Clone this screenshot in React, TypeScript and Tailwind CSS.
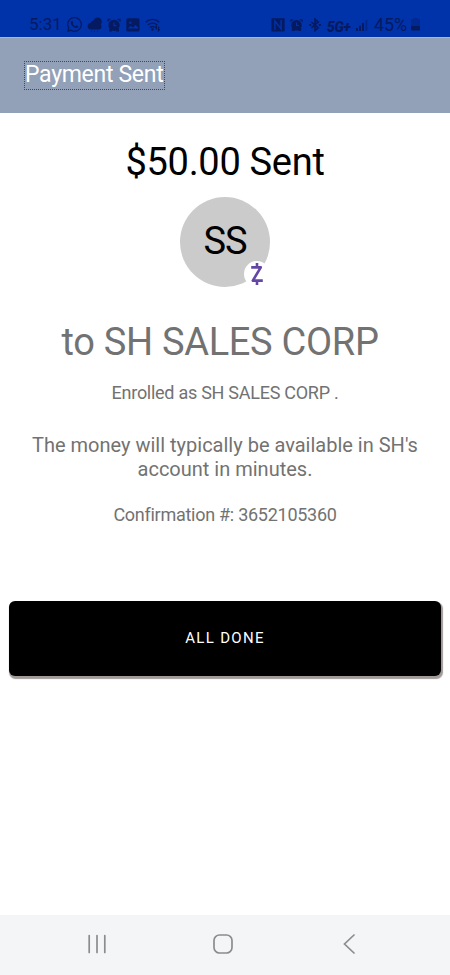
import type { ReactNode } from "react";
import { FaWhatsapp } from "react-icons/fa";

const AlarmIcon = ({ className }: { className?: string }) => (
  <svg viewBox="0 0 14 14" className={className} fill="currentColor">
    <circle cx="7" cy="7.3" r="5.6" />
    <path d="M.4 4V.8h3.8zM13.6 4V.8H9.8zM2 10.4h3v3H2zM9 10.4h3v3H9z" />
    <path d="M7 4.4v3.2h2.4" fill="none" stroke="#0032a9" strokeWidth="1.2" />
  </svg>
);

const CloudIcon = () => (
  <svg viewBox="0 0 15 16" className="h-4 w-[15px]" fill="currentColor">
    <circle cx="10.6" cy="4.8" r="4.2" />
    <path d="M3.6 12.6a3.3 3.3 0 0 1-.3-6.5 4.3 4.3 0 0 1 8.1.5 3 3 0 0 1 .2 6z" />
    <path d="M4 13.8h1v1H4zM7 13.8h1v1H7zM10 13.8h1v1h-1z" opacity=".7" />
  </svg>
);

const PictureIcon = () => (
  <svg viewBox="0 0 14 14" className="h-3.5 w-3.5">
    <rect x=".3" y=".3" width="13.2" height="13.2" rx="1.6" fill="currentColor" />
    <circle cx="4.4" cy="4.8" r="1.2" fill="#0032a9" />
    <path d="M2 10.2 4.8 8l2.3 1.7 2.4-2.6 2.6 2.3v1H2z" fill="#0032a9" />
  </svg>
);

const WifiIcon = () => (
  <svg viewBox="0 0 16 14" className="h-3.5 w-4" fill="none" stroke="currentColor" strokeWidth="1.3">
    <path d="M.6 4.2a10 10 0 0 1 13.8 0M2.7 6.9a7.2 7.2 0 0 1 9.6 0M4.9 9.4a4.3 4.3 0 0 1 4.6-.3" />
    <circle cx="7.4" cy="11.4" r="1.3" fill="currentColor" stroke="none" />
    <path d="M11.3 11.6V8.4L10 9.8M13.5 8.6v4l1.4-1.5" />
  </svg>
);

const NfcIcon = () => (
  <svg viewBox="0 0 14 14" className="h-3.5 w-3.5">
    <rect x=".4" y=".3" width="13.2" height="13.2" rx=".8" fill="currentColor" />
    <path d="M3.9 12V3l6.2 8V2" fill="none" stroke="#0032a9" strokeWidth="1.4" />
  </svg>
);

const BluetoothIcon = () => (
  <svg viewBox="0 0 12 14" className="h-3.5 w-3" fill="none" stroke="currentColor" strokeWidth="1.6">
    <path d="m2.4 4 6.8 5.8L6 12.6V1.2l3.2 2.9-6.8 5.8" />
    <path d="M.2 7h2M9.8 7h2" strokeWidth="1.8" />
  </svg>
);

const SignalIcon = () => (
  <svg viewBox="0 0 12 12" className="h-3 w-3" fill="currentColor">
    <path d="M0 9h2v3H0zM3 6.8h2V12H3zM6 4h2v8H6z" />
    <path d="M9.3 1h2v11h-2z" opacity=".45" />
  </svg>
);

const BatteryIcon = () => (
  <svg viewBox="0 0 9 13" className="h-[13px] w-[9px]" fill="currentColor">
    <path d="M2.5 0h4v1.2H9V8H0V1.2h2.5z" opacity=".35" />
    <path d="M0 8h9v3.6a1 1 0 0 1-1 1H1a1 1 0 0 1-1-1z" />
  </svg>
);

const ZelleIcon = () => (
  <svg viewBox="0 0 14 24" className="h-6 w-3.5" fill="none" stroke="#6446a5" strokeWidth="2.6">
    <path d="M1.2 5.4h9.6L2.8 18.6h10" strokeLinejoin="round" />
    <path d="M7 .9v4.2M7 18.9v4.2" strokeWidth="2.6" />
  </svg>
);

const NavButton = ({ label, children }: { label: string; children: ReactNode }) => (
  <button aria-label={label} className="flex h-6 w-6 items-center justify-center">
    <svg viewBox="0 0 24 24" className="h-6 w-6" fill="none" stroke="#8c8c90" strokeWidth="1.7" strokeLinecap="round">
      {children}
    </svg>
  </button>
);

const StatusBar = () => (
  <div className="flex h-[37px] items-center justify-between bg-[#0032a9] pt-3 pr-[30px] pl-[29px] text-[#051a60]">
    <div className="flex items-center">
      <span className="w-[37px] text-[17px] leading-none">5:31</span>
      <FaWhatsapp className="h-[17px] w-[17px]" />
      <span className="ml-1">
        <CloudIcon />
      </span>
      <AlarmIcon className="ml-[5px] h-3.5 w-3.5" />
      <span className="ml-[5px]">
        <PictureIcon />
      </span>
      <span className="ml-[5px]">
        <WifiIcon />
      </span>
    </div>
    <div className="flex items-center">
      <NfcIcon />
      <AlarmIcon className="ml-[5px] h-3.5 w-[13px]" />
      <span className="ml-1.5">
        <BluetoothIcon />
      </span>
      <span className="ml-1.5 w-[29px] pt-1 text-[14px] leading-none font-black tracking-tight italic">
        5G+
      </span>
      <SignalIcon />
      <span className="ml-1.5 w-[37px] text-[17.8px] leading-none">45%</span>
      <BatteryIcon />
    </div>
  </div>
);

export default function App() {
  return (
    <div className="flex h-[975px] w-[450px] flex-col bg-white font-[Roboto,sans-serif] text-[#727272]">
      <StatusBar />
      <header className="flex h-[76px] items-center border-t border-[#a9b8d6] bg-[#92a1b8] pl-6">
        <h1 className="h-[29px] w-[141px] border border-dotted border-[#1546d8] text-[23px] leading-[26px] tracking-[-0.3px] whitespace-nowrap text-white">
          Payment Sent
        </h1>
      </header>
      <main className="flex flex-1 flex-col items-center px-[9px] text-center">
        <h2 className="mt-[27px] text-[38px] leading-[44px] tracking-[-0.3px] text-black">$50.00 Sent</h2>
        <div className="relative mt-[13px] flex h-[90px] w-[90px] items-center justify-center rounded-full bg-[#cbcbcb] pb-0.5 text-[38px] tracking-[-1px] text-black">
          SS
          <div className="absolute right-0 bottom-0 flex h-[26px] w-[26px] items-center justify-center rounded-full bg-white">
            <ZelleIcon />
          </div>
        </div>
        <h2 className="mt-8 mr-[10px] text-[38px] leading-[46px] tracking-[-0.3px]">to SH SALES CORP</h2>
        <p className="mt-[17px] text-[18px] leading-[22px] tracking-[-0.27px]">Enrolled as SH SALES CORP .</p>
        <p className="mt-[29px] w-[400px] text-[20px] leading-[24px]">
          The money will typically be available in SH's account in minutes.
        </p>
        <p className="mt-[23px] text-[18px] leading-[22px] tracking-[-0.27px]">Confirmation #: 3652105360</p>
        <button className="mt-[75px] h-[75px] w-full rounded-md bg-black text-[15px] tracking-[1.3px] text-white shadow-[1px_2px_1px_0.5px_#a09a98]">
          ALL DONE
        </button>
      </main>
      <nav className="flex h-[60px] items-center bg-[#f4f5f7] pb-0.5 pl-[85px]">
        <NavButton label="Recent apps">
          <path d="M4.2 3.5v17M12 3.5v17M19.8 3.5v17" />
        </NavButton>
        <div className="ml-[102px]">
          <NavButton label="Home">
            <rect x="3" y="3" width="18" height="18" rx="5.5" />
          </NavButton>
        </div>
        <div className="ml-[102px]">
          <NavButton label="Back">
            <path d="M17 3 7.5 12 17 21" />
          </NavButton>
        </div>
      </nav>
    </div>
  );
}
